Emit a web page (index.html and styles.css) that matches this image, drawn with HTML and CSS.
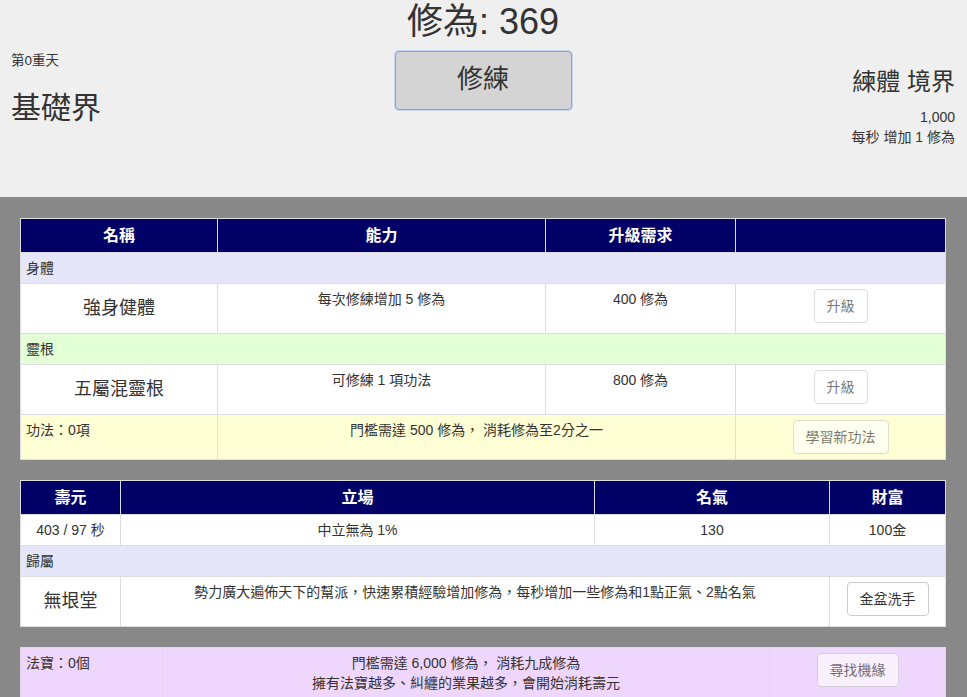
FILE: index.html
```html
<!DOCTYPE html>
<html lang="zh-Hant">
<head>
<meta charset="utf-8">
<title>修為</title>
<link rel="stylesheet" href="styles.css">
</head>
<body>
<header class="top">
  <div class="top-left">
    <div class="small-line">第0重天</div>
    <h2 class="realm">基礎界</h2>
  </div>
  <div class="top-center">
    <h1 class="score">修為: 369</h1>
    <button class="train-btn">修練</button>
  </div>
  <div class="top-right">
    <h3 class="stage">練體 境界</h3>
    <div class="info-line">1,000</div>
    <div class="info-line">每秒 增加 1 修為</div>
  </div>
</header>

<main class="board">
  <table class="grid">
    <colgroup>
      <col class="c1-1"><col class="c1-2"><col class="c1-3"><col class="c1-4">
    </colgroup>
    <thead>
      <tr><th>名稱</th><th>能力</th><th>升級需求</th><th></th></tr>
    </thead>
    <tbody>
      <tr class="row-lavender"><td colspan="4" class="left">身體</td></tr>
      <tr class="row-white">
        <td><h4 class="name">強身健體</h4></td>
        <td>每次修練增加 5 修為</td>
        <td>400 修為</td>
        <td><button class="btn" disabled>升級</button></td>
      </tr>
      <tr class="row-green"><td colspan="4" class="left">靈根</td></tr>
      <tr class="row-white">
        <td><h4 class="name">五屬混靈根</h4></td>
        <td>可修練 1 項功法</td>
        <td>800 修為</td>
        <td><button class="btn" disabled>升級</button></td>
      </tr>
      <tr class="row-yellow">
        <td class="left">功法：0項</td>
        <td colspan="2">門檻需達 500 修為， 消耗修為至2分之一</td>
        <td><button class="btn" disabled>學習新功法</button></td>
      </tr>
    </tbody>
  </table>

  <table class="grid">
    <colgroup>
      <col class="c2-1"><col class="c2-2"><col class="c2-3"><col class="c2-4">
    </colgroup>
    <thead>
      <tr><th>壽元</th><th>立場</th><th>名氣</th><th>財富</th></tr>
    </thead>
    <tbody>
      <tr class="row-white">
        <td>403 / 97 秒</td>
        <td>中立無為 1%</td>
        <td>130</td>
        <td>100金</td>
      </tr>
      <tr class="row-lavender"><td colspan="4" class="left">歸屬</td></tr>
      <tr class="row-white">
        <td><h4 class="name">無垠堂</h4></td>
        <td colspan="2">勢力廣大遍佈天下的幫派，快速累積經驗增加修為，每秒增加一些修為和1點正氣、2點名氣</td>
        <td><button class="btn">金盆洗手</button></td>
      </tr>
    </tbody>
  </table>

  <table class="grid grid-purple">
    <colgroup>
      <col class="c3-1"><col class="c3-2"><col class="c3-3">
    </colgroup>
    <tbody>
      <tr class="row-purple">
        <td class="left">法寶：0個</td>
        <td>門檻需達 6,000 修為， 消耗九成修為<br>擁有法寶越多、糾纏的業果越多，會開始消耗壽元</td>
        <td><button class="btn" disabled>尋找機緣</button></td>
      </tr>
    </tbody>
  </table>
</main>
</body>
</html>
```

FILE: styles.css
```css
* { box-sizing: border-box; }

html, body {
  margin: 0;
  padding: 0;
}

body {
  font-family: "Liberation Sans", "Noto Sans CJK TC", sans-serif;
  font-size: 14px;
  line-height: 20px;
  color: #333;
  background: #888888;
}

.top {
  display: grid;
  grid-template-columns: 1fr auto 1fr;
  height: 197px;
  background: #efefef;
  padding: 0 12px 0 11px;
}

.small-line {
  font-size: 13.5px;
  line-height: 20px;
}

.info-line {
  font-size: 14px;
  line-height: 20px;
}

.top-left .small-line {
  margin-top: 51px;
}

.realm {
  margin: 20px 0 0;
  font-size: 30px;
  line-height: 33px;
  font-weight: 400;
}

.top-center {
  display: flex;
  flex-direction: column;
  align-items: center;
}

.score {
  margin: 2px 0 0;
  font-size: 36px;
  line-height: 40px;
  font-weight: 400;
}

.train-btn {
  margin-top: 9px;
  width: 177px;
  height: 59px;
  background: #d4d4d4;
  border: 1px solid #7ea6e2;
  border-radius: 4px;
  box-shadow: 0 0 0 1px rgba(126, 166, 226, 0.35);
  font-family: inherit;
  font-size: 26px;
  line-height: 30px;
  color: #333;
  padding: 0 0 4px;
}

.top-right {
  text-align: right;
}

.stage {
  margin: 69px 0 12px;
  font-size: 24px;
  line-height: 26px;
  font-weight: 400;
}

.board {
  padding: 21px 22px 1px 20px;
}

.grid {
  width: 100%;
  table-layout: fixed;
  border-collapse: collapse;
  background: #fff;
  border: 1px solid #ddd;
  margin-bottom: 20px;
}

.grid th,
.grid td {
  border: 1px solid #ddd;
  padding: 5px;
  text-align: center;
  vertical-align: top;
}

.grid th {
  background: #000066;
  color: #fff;
  font-size: 16px;
  line-height: 23px;
  font-weight: 700;
}

.grid td.left {
  text-align: left;
}

.name {
  margin: 10px 0;
  font-size: 18px;
  line-height: 19px;
  font-weight: 400;
}

.row-white td { background: #fff; }
.row-lavender td { background: #e6e6fa; }
.row-green td { background: #e3ffd6; }
.row-yellow td { background: #ffffd5; }
.row-purple td { background: #efd6fd; }

.grid-purple td {
  border-color: #e6d3ee;
}

.btn {
  display: inline-block;
  padding: 6px 12px;
  font-family: inherit;
  font-size: 14px;
  line-height: 20px;
  color: #333;
  background: #fff;
  border: 1px solid #ccc;
  border-radius: 4px;
  cursor: pointer;
}

.btn:disabled {
  opacity: 0.65;
  cursor: not-allowed;
}

.c1-1 { width: 197px; }
.c1-2 { width: 328px; }
.c1-3 { width: 190px; }
.c1-4 { width: 210px; }

.c2-1 { width: 100px; }
.c2-2 { width: 474px; }
.c2-3 { width: 235px; }
.c2-4 { width: 116px; }

.c3-1 { width: 142px; }
.c3-2 { width: 607px; }
.c3-3 { width: 176px; }
```
